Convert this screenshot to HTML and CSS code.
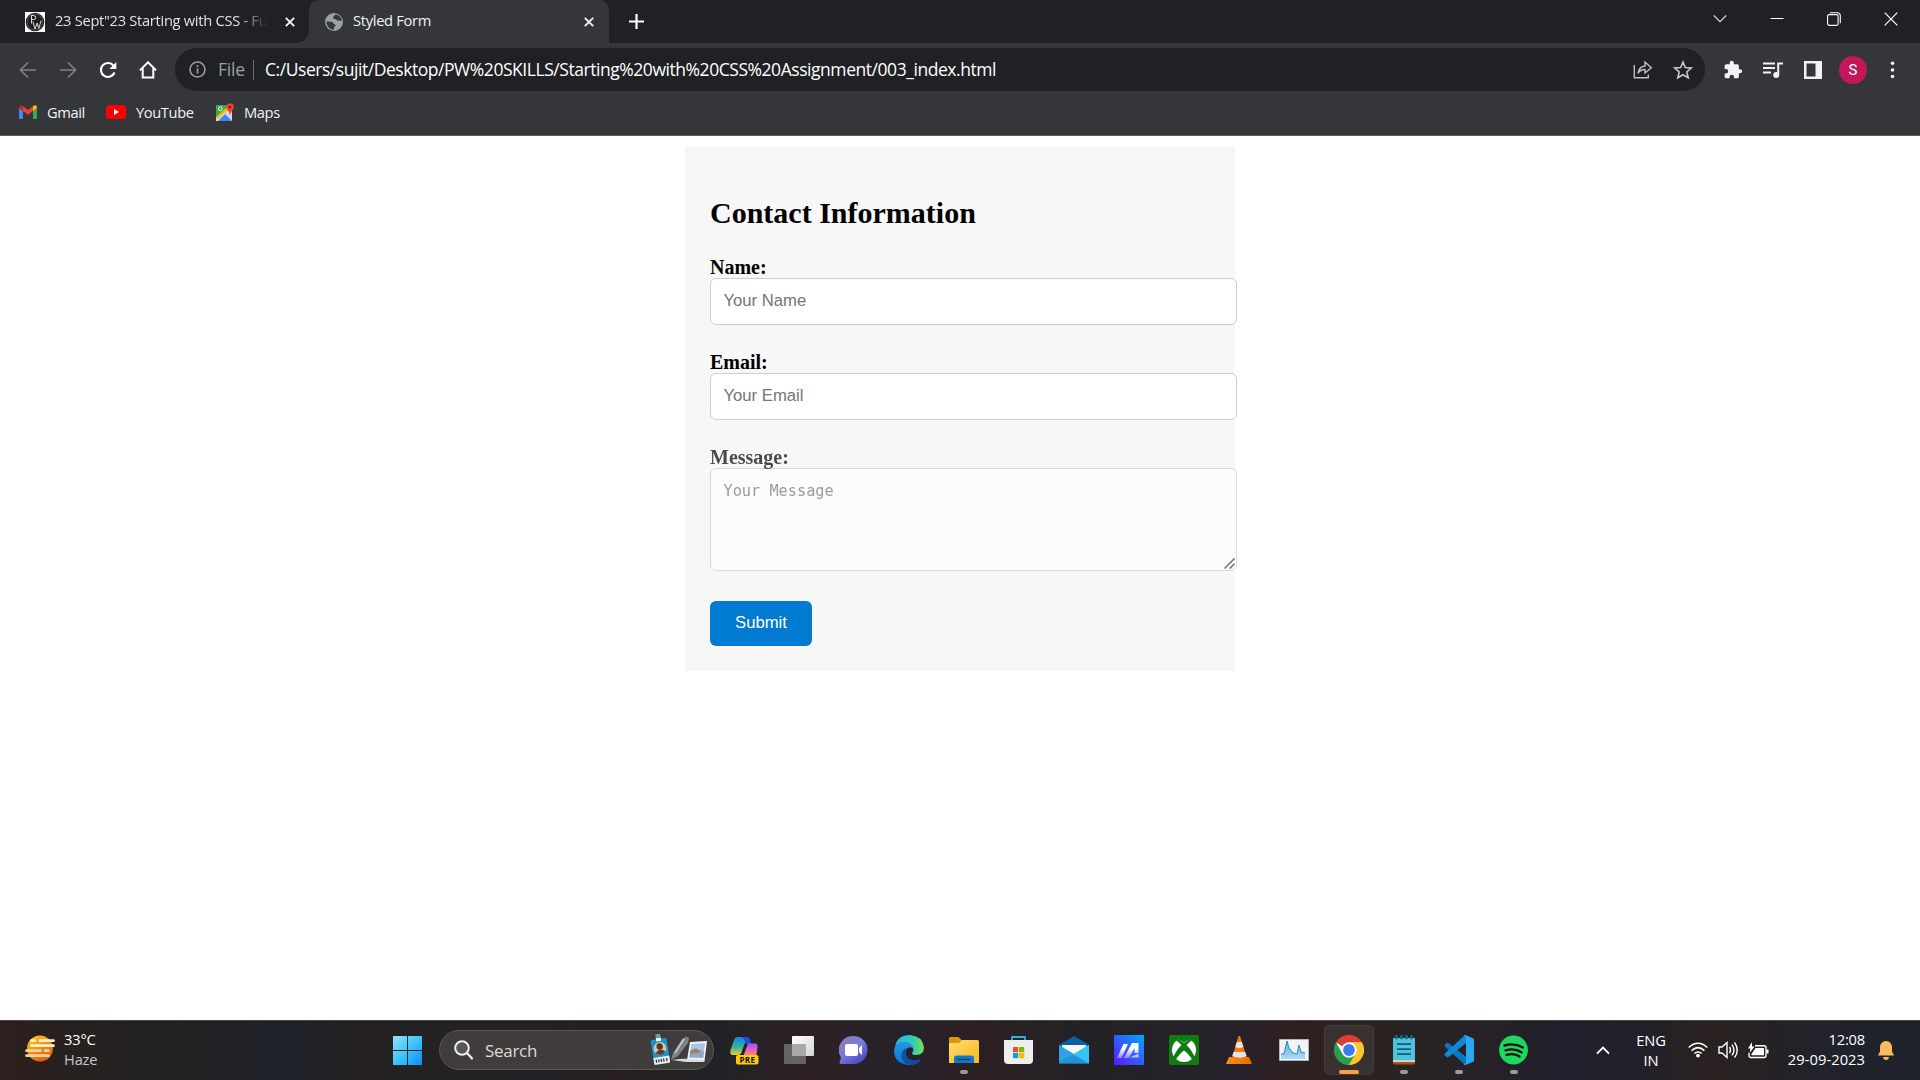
FILE: index.html
```html
<!DOCTYPE html>
<html lang="en">
<head>
<meta charset="utf-8">
<title>Styled Form</title>
<link rel="stylesheet" href="styles.css">
</head>
<body>
<header class="browser">
  <div class="tabstrip">
    <div class="tab tab-idle">
      <svg class="favicon" width="20" height="20" viewBox="0 0 20 20"><path fill="#fff" d="M0 0h20v20H0z"/><circle cx="10" cy="10" r="9.3" fill="#1d1e20"/><circle cx="10" cy="10" r="7.9" fill="none" stroke="#777" stroke-width=".6"/><path d="M6.500 11.500V3.500h2q2.200 0 2.200 2t-2.200 2H6.500M8 9.500l2 7.500 2.200-6 1.500 5.500 2.500-8" fill="none" stroke="#ddd" stroke-width="1"/></svg>
      <span class="tab-title">23 Sept"23 Starting with CSS - Full</span>
      <svg width="10" height="10" viewBox="0 0 10 10"><path d="M.8.8l8.400 8.400M9.200.8L.8 9.200" stroke="#f1f3f4" stroke-width="1.900"/></svg>
    </div>
    <div class="tab tab-active">
      <svg width="18" height="18" viewBox="0 0 18 18"><circle cx="9" cy="9" r="9" fill="#9aa0a6"/><path d="M10.500 1.500Q8 3 8 5q1 1.500 3 1 .5 2 2.500 1.500L16.800 8Q17 4 12 1.700zM1.500 8.500l5 .2q2.200.3 2 2.300 2.500 0 2 2l-1.500 1v2.700Q3 16.500 1.500 10z" fill="#35363a"/></svg>
      <span class="tab-title">Styled Form</span>
      <svg width="10" height="10" viewBox="0 0 10 10"><path d="M.8.8l8.400 8.400M9.200.8L.8 9.200" stroke="#f1f3f4" stroke-width="1.900"/></svg>
    </div>
    <svg class="new-tab" width="15" height="15" viewBox="0 0 15 15"><path d="M7.500 0v15M0 7.500h15" stroke="#fff" stroke-width="2.200"/></svg>
    <div class="window-controls">
      <svg width="14" height="14" viewBox="0 0 14 14"><path d="M.8 3.500L7 9.700l6.200-6.200" fill="none" stroke="#ddd" stroke-width="1.100"/></svg>
      <svg width="14" height="14" viewBox="0 0 14 14"><path d="M.5 6.500h13" stroke="#fff"/></svg>
      <svg width="14" height="14" viewBox="0 0 14 14"><rect x=".6" y="2.600" width="10.500" height="10.800" rx="1.600" fill="none" stroke="#fff" stroke-width="1.100"/><path d="M2.800.7h7.500q3 0 3 3v7.600" fill="none" stroke="#fff" stroke-width="1.100"/></svg>
      <svg width="14" height="14" viewBox="0 0 14 14"><path d="M.7.7l12.600 12.600M13.300.7L.7 13.300" stroke="#fff" stroke-width="1.200"/></svg>
    </div>
  </div>
  <div class="toolbar">
    <div class="slots">
      <svg width="18" height="18" viewBox="0 0 18 18"><path d="M17 9H2M9 1.500L1.500 9 9 16.500" fill="none" stroke="#7d7e82" stroke-width="1.700"/></svg>
      <svg width="18" height="18" viewBox="0 0 18 18"><path d="M1 9h15M9 1.500L16.500 9 9 16.500" fill="none" stroke="#7d7e82" stroke-width="1.700"/></svg>
      <svg width="18" height="18" viewBox="0 0 18 18"><path d="M15.500 11.500A7 7 0 1 1 14.500 4.700" fill="none" stroke="#fff" stroke-width="2.100"/><path d="M17.300 1v7h-7z" fill="#fff"/></svg>
      <svg width="18" height="18" viewBox="0 0 18 18"><path d="M.9 9.400L9 1.300l8.100 8.100M3.700 7v9.600h10.600V7" fill="none" stroke="#fff" stroke-width="2"/></svg>
    </div>
    <div class="omnibox">
      <svg width="17" height="17" viewBox="0 0 17 17"><circle cx="8.500" cy="8.500" r="7.500" fill="none" stroke="#9aa0a6" stroke-width="1.600"/><path d="M8.500 7.500v5M8.500 4.300v1.800" stroke="#9aa0a6" stroke-width="1.700"/></svg>
      <span class="scheme">File</span>
      <span class="url">C:/Users/sujit/Desktop/PW%20SKILLS/Starting%20with%20CSS%20Assignment/003_index.html</span>
      <div class="slots">
        <svg width="20" height="20" viewBox="0 0 20 20"><path d="M1.300 5v12.800h14V14.500M5 13.500Q6 6.500 12 6V2l6.300 5.700L12 13V9.500q-5 0-7 4z" fill="none" stroke="#bdc1c6" stroke-width="1.400"/></svg>
        <svg width="20" height="20" viewBox="0 0 20 20"><path d="M10 2l2.300 5.500 6 .5-4.500 4 1.400 5.800L10 14.700l-5.200 3.100L6.200 12 1.700 8l6-.5z" fill="none" stroke="#c4c7cb" stroke-width="1.600"/></svg>
      </div>
    </div>
    <div class="slots">
      <svg width="20" height="20" viewBox="0 0 24 24"><path d="M20.500 11H19V7a2 2 0 0 0-2-2h-4V3.500a2.500 2.500 0 0 0-5 0V5H4a2 2 0 0 0-2 2v3.800h1.500a2.700 2.700 0 0 1 0 5.400H2V20a2 2 0 0 0 2 2h3.800v-1.500a2.700 2.700 0 0 1 5.400 0V22H17a2 2 0 0 0 2-2v-4h1.500a2.500 2.500 0 0 0 0-5z" fill="#f1f3f4"/></svg>
      <svg width="20" height="18" viewBox="0 0 20 18"><path d="M0 2.600h12M0 7.100h12M0 11.600h8M15.200 14V2.600H20" stroke="#f1f3f4" stroke-width="2" fill="none"/><circle cx="13.200" cy="14" r="3" fill="#f1f3f4"/></svg>
      <svg width="18" height="18" viewBox="0 0 18 18"><path d="M0 0h18v18H0zM2.500 2.500v13h9v-13z" fill="#f1f3f4" fill-rule="evenodd"/></svg>
      <span class="avatar">S</span>
      <svg width="18" height="18" viewBox="0 0 18 18"><g fill="#f1f3f4"><circle cx="8.500" cy="2.300" r="1.800"/><circle cx="8.500" cy="9" r="1.800"/><circle cx="8.500" cy="15.500" r="1.800"/></g></svg>
    </div>
  </div>
  <nav class="bookmarks">
    <span class="bookmark gmail"><svg width="18" height="14" viewBox="0 0 18 14"><path d="M0 3v10q0 1 1 1h3V5z" fill="#4285f4"/><path d="M18 3v10q0 1-1 1h-3V5z" fill="#34a853"/><path d="M14 1.300V6l4-3V2q-.5-2.500-2.800-1.500z" fill="#fbbc04"/><path d="M0 2v1.200L4 6V1.300L2.800.5Q.5-.3 0 2z" fill="#c5221f"/><path d="M4 1.300L9 5l5-3.700V6L9 9.800 4 6z" fill="#ea4335"/></svg>Gmail</span>
    <span class="bookmark youtube"><svg width="20" height="14" viewBox="0 0 20 14"><rect width="20" height="14" rx="3.500" fill="#f00"/><path d="M8 4v6l5-3z" fill="#fff"/></svg>YouTube</span>
    <span class="bookmark maps"><svg width="18" height="19" viewBox="0 0 18 19"><path d="M0 2h16v16H0z" fill="#34a853"/><path d="M0 15L13 3l3 3v12H0z" fill="#d8dce0"/><path d="M2 18l7-7 7 7z" fill="#4285f4"/><path d="M1 15L13 4" stroke="#fbbc04" stroke-width="2.500"/><circle cx="4.300" cy="5.800" r="1.900" fill="none" stroke="#fff"/><path d="M14 12q-1-3.500-2.800-5.200Q9 3 12 .8q4-1.600 5.700 2 .6 2-1 4Q15 9 14 12z" fill="#ea4335"/><circle cx="14" cy="4.200" r="1.400" fill="#8c1914"/></svg>Maps</span>
  </nav>
</header>

<main class="page">
  <form class="contact">
    <h2>Contact Information</h2>
    <label for="name">Name:</label>
    <input id="name" type="text" placeholder="Your Name">
    <label for="email">Email:</label>
    <input id="email" type="email" placeholder="Your Email">
    <div class="faded">
      <label for="message">Message:</label>
      <textarea id="message" placeholder="Your Message"></textarea>
      <svg class="grip" width="11" height="11" viewBox="0 0 11 11"><path d="M.5 10.500l10-10M5.700 10.500l4.800-4.800" stroke="#333" stroke-width="1.500"/></svg>
    </div>
    <button type="button">Submit</button>
  </form>
</main>

<footer class="taskbar">
  <div class="weather">
    <svg width="30" height="28" viewBox="0 0 30 28"><defs><linearGradient id="sun" x1="0" y1="0" x2=".6" y2="1"><stop stop-color="#ffd11a"/><stop offset="1" stop-color="#e65b13"/></linearGradient></defs><circle cx="15" cy="13.500" r="13" fill="url(#sun)"/><g stroke-width="2.700" stroke-linecap="round"><path d="M6.500 5.700h3.500M15 5.700h13.500M6.500 10.700h22" stroke="#fff0c4"/><path d="M1.500 15.700h14M20 15.700h3.500M1.500 20.700h22" stroke="#eed49a"/></g></svg>
    <div class="stack"><span>33°C</span><span class="dim">Haze</span></div>
  </div>
  <svg class="start" width="29" height="29" viewBox="0 0 29 29"><defs><linearGradient id="win" x1="0" y1="0" x2="1" y2="1"><stop stop-color="#8fe3ff"/><stop offset=".5" stop-color="#3fc3fb"/><stop offset="1" stop-color="#0a8cf5"/></linearGradient></defs><path d="M0 0h14v14H0zM15 0h14v14H15zM0 15h14v14H0zM15 15h14v14H15z" fill="url(#win)"/></svg>
  <div class="search">
    <svg width="19" height="20" viewBox="0 0 19 20"><circle cx="8" cy="8" r="6.800" fill="#555" stroke="#eee" stroke-width="2"/><path d="M13 13l5 5.500" stroke="#eee" stroke-width="2.300" stroke-linecap="round"/></svg>
    <span>Search</span>
    <svg class="doodle" width="57" height="32" viewBox="0 0 57 32"><g transform="rotate(-9 10 18)"><path d="M8 0h5v6H8z" fill="#789aa4"/><rect x="2.500" y="5" width="16" height="25" rx="1.500" fill="#1c91cf"/><path d="M8 4h5v3H8z" fill="#fff"/><circle cx="10.500" cy="14.500" r="6.400" fill="#d8c3a5"/><circle cx="10.500" cy="12.500" r="3.200" fill="#4d3528"/><path d="M5.500 18.500q5-6 10 0-5 5-10 0z" fill="#5d3d2c"/><path d="M2.500 23h16v6q0 1-1 1h-14q-1 0-1-1z" fill="#e8edf0"/><path d="M5 25v3M7.500 25v3M10 25v3M12.500 25v3M15.500 25v3" stroke="#222" stroke-width="1.200"/></g><path d="M40 8l17-1-2.500 20L37 26z" fill="#edf3fa"/><path d="M41.500 10l13.500-.8-1.200 8.800-13.800 1z" fill="#a9c5e4"/><path d="M40.500 16l5-2 8.500 4-.7 6-14.300-.5z" fill="#8ea9c8"/><path d="M40.300 17l5.700-2.500 5 3-3 1.500-8 1z" fill="#a5806c"/><path d="M22 26q12-2 16-1l17 1.500-1 1.500H36z" fill="#d5dbe4"/><path d="M21 26l2-7 9-14 4-2.500 3 1.500-1 5-10 13z" fill="#788387"/><path d="M25 19l9-14" stroke="#dbe3e3" stroke-width="1.300"/></svg>
  </div>
  <div class="apps">
    <span class="app"><svg width="30" height="30" viewBox="0 0 30 30"><defs><linearGradient id="cpa" x1="0" y1="0" x2="0" y2="1"><stop stop-color="#1780e8"/><stop offset=".55" stop-color="#31b49a"/><stop offset="1" stop-color="#f2cd28"/></linearGradient><linearGradient id="cpb" x1="0" y1="0" x2="0" y2="1"><stop stop-color="#9a59ee"/><stop offset=".5" stop-color="#e961bb"/><stop offset="1" stop-color="#f69567"/></linearGradient></defs><path d="M8 2h10l-5 14q-1 4-4 4H3.500Q.5 20 1.500 15L5 5q1-3 3-3z" fill="url(#cpa)"/><path d="M12 2h6.500q2.500 0 3.500 7h-5.500q-.5-6-4.500-7z" fill="#1d4fd8"/><path d="M19 8.500h7q3 0 2.500 4L27 22H14z" fill="url(#cpb)"/><rect x="7" y="20" width="22.500" height="9.500" rx="2" fill="#ffc80a"/><text x="18.400" y="27.700" text-anchor="middle" font-size="8" font-weight="700" letter-spacing=".4" fill="#111">PRE</text></svg></span>
    <span class="app"><svg width="30" height="30" viewBox="0 0 30 30"><defs><linearGradient id="tv" x1="0" y1="0" x2="1" y2="1"><stop stop-color="#fff"/><stop offset="1" stop-color="#d4d4d4"/></linearGradient></defs><rect x="8" y="1" width="22" height="20" rx="1" fill="url(#tv)"/><rect y="9" width="22" height="20" rx="1" fill="#646464"/><path d="M8 9h14v12H8z" fill="#a9a9a9"/></svg></span>
    <span class="app"><svg width="30" height="30" viewBox="0 0 30 30"><defs><linearGradient id="ch" x1="0" y1="0" x2=".7" y2="1"><stop stop-color="#9572b5"/><stop offset=".5" stop-color="#7780d8"/><stop offset="1" stop-color="#4b4bc2"/></linearGradient></defs><path d="M14.500 1a14 14 0 1 1 0 28H1q-1-1 1-6.500A14 14 0 0 1 14.500 1z" fill="url(#ch)"/><rect x="6" y="9" width="13" height="12" rx="2" fill="#fff"/><path d="M20 13l3-3v10l-3-3z" fill="#fff"/></svg></span>
    <span class="app"><svg width="30" height="30" viewBox="0 0 30 30"><defs><linearGradient id="ea"><stop stop-color="#2bb5e8"/><stop offset=".6" stop-color="#33c8c0"/><stop offset="1" stop-color="#74e44c"/></linearGradient><linearGradient id="eb" x1="0" y1="0" x2="0" y2="1"><stop stop-color="#239ddd"/><stop offset="1" stop-color="#0670cf"/></linearGradient></defs><path d="M1 12Q3 0 16 0q12 1 14 12 0 8-8 8-4 0-4-2 2-2 1-5-2-5-8-6Q4 7 1 12z" fill="url(#ea)"/><path d="M0 17Q0 7 10 6.700q8 0 9.500 7-6-4-8 3 0 9 10 10 2 0 5-1.300Q22 30 15 30 1 29 0 17z" fill="url(#eb)"/><path d="M11.500 16q-1 8 7 9 5 1 9-2-4 7-11 7-9-2-9-9 0-6 5-8z" fill="#104f9f"/></svg></span>
    <span class="app"><svg width="30" height="30" viewBox="0 0 30 30"><defs><linearGradient id="fo" x1="0" y1="0" x2="1" y2="1"><stop stop-color="#ffdd70"/><stop offset="1" stop-color="#fbb819"/></linearGradient></defs><path d="M0 3.500Q0 2 1.500 2h8l3 3H28v8H0z" fill="#dc9a08"/><path d="M0 8h10l3-3h15.500Q30 5 30 6.500V28H0z" fill="url(#fo)"/><path d="M5 28v-5q0-2.500 2.500-2.500h15q2.500 0 2.500 2.500v5z" fill="#117acb"/><path d="M9 24.500h12" stroke="#0b477e" stroke-width="1.400" stroke-linecap="round"/></svg><i class="dot"></i></span>
    <span class="app"><svg width="30" height="30" viewBox="0 0 30 30"><path d="M8 6V2h13v4" fill="none" stroke="#24b3e6" stroke-width="1.800"/><path d="M0 5h29v20q0 4-4 4H4q-4 0-4-4z" fill="#eee"/><path d="M9 12h5.200v5.200H9z" fill="#f04e23"/><path d="M15 12h5.200v5.200H15z" fill="#7eb800"/><path d="M9 18h5.200v5.200H9z" fill="#00a2ed"/><path d="M15 18h5.200v5.200H15z" fill="#fdb900"/></svg></span>
    <span class="app"><svg width="30" height="30" viewBox="0 0 30 30"><path d="M0 10L15 1l15 9v5H0z" fill="#0960a8"/><path d="M3 10h24v9H3z" fill="#f5f5f5"/><path d="M0 10l15 9 15-9v18.500H0z" fill="#2aa4e6"/><path d="M15 19l15-9v18.500z" fill="#34c5f3"/><path d="M13 20l17 8.500H0V27z" fill="#1581cc" opacity=".45"/></svg></span>
    <span class="app"><svg width="30" height="30" viewBox="0 0 30 30"><defs><linearGradient id="as" x1="0" y1="1" x2="1" y2="0"><stop stop-color="#5d17ff"/><stop offset="1" stop-color="#00a8ff"/></linearGradient><linearGradient id="am" x1="0" y1="1" x2="0" y2="0"><stop stop-color="#8f7dff"/><stop offset=".6" stop-color="#fff"/></linearGradient></defs><path d="M0 0h30v30H0z" fill="url(#as)"/><path d="M3 23l6.500-14H14L7.500 23zM10 23l8-15h6.500v10H20.500v-5L15 23z" fill="url(#am)"/><path d="M16 22.500l8.500-4v4z" fill="#b3c8ff"/></svg></span>
    <span class="app"><svg width="30" height="30" viewBox="0 0 30 30"><rect width="30" height="30" rx="2" fill="#107c10"/><circle cx="15" cy="15" r="12" fill="#fff"/><path d="M6 5q4-1.500 9 2.500Q20 3.500 24 5l-1-2H7zM3 25Q7 15 12.500 10L7 5l2-1 6 4 6-4 2 1-5.500 5Q23 15 27 25l-3 1q-4-7-9-10.500Q10 19 6 26z" fill="#107c10"/></svg></span>
    <span class="app"><svg width="30" height="30" viewBox="0 0 30 30"><defs><linearGradient id="vl"><stop stop-color="#f59312"/><stop offset="1" stop-color="#e86605"/></linearGradient></defs><path d="M5 22h20l3 7H2z" fill="url(#vl)"/><path d="M14.500 1h1.500l7 22q-7.500 4-15 0z" fill="#f17c0c"/><path d="M12.800 7h5l1.600 5q-4 2-8.200 0zM9.500 17h11.800l1.200 4q-7 3.500-14.300 0z" fill="#e4e4e4"/></svg></span>
    <span class="app"><svg width="30" height="30" viewBox="0 0 30 30"><defs><linearGradient id="mo" x1="0" y1="0" x2="0" y2="1"><stop stop-color="#5da9d7"/><stop offset="1" stop-color="#a9ddfa"/></linearGradient></defs><path d="M.5 4.500h29v21H.5z" fill="#f1f3f8" stroke="#aeb8c4"/><path d="M2 24v-5h3l3-13 2 7 4 5 4 1 2-9 2 7 4 1v6z" fill="url(#mo)"/><path d="M2 19h3l3-13 2 7 4 5 4 1 2-9 2 7 4 1" fill="none" stroke="#3286b7"/></svg></span>
    <span class="app current"><svg width="30" height="30" viewBox="0 0 30 30"><circle cx="15" cy="15" r="14.500" fill="#fff"/><path d="M15 0a15 15 0 0 1 13 7.500H15a7.500 7.500 0 0 0-6.500 3.750L2 7.500A15 15 0 0 1 15 0z" fill="#e33b2e"/><path d="M28 7.500A15 15 0 0 1 15 30l6.500-11.250A7.500 7.500 0 0 0 15 7.500z" fill="#fcc52b"/><path d="M15 30A15 15 0 0 1 2 7.500l6.500 11.250A7.500 7.500 0 0 0 21.500 18.750z" fill="#2b9d4b"/><circle cx="15" cy="15" r="7.500" fill="#fff"/><circle cx="15" cy="15" r="5.900" fill="#3a7cec"/></svg><i class="dot"></i></span>
    <span class="app"><svg width="30" height="30" viewBox="0 0 30 30"><path d="M4 24h22v4q0 1.500-2 1.500H6q-2 0-2-1.500z" fill="#b44e13"/><path d="M4 22h22v4.800H4z" fill="#f5f5f5"/><path d="M4 3h22v22.500H4z" fill="#4fc1db"/><path d="M8 9.200h14M8 14.200h14M8 19.200h14" stroke="#08617f" stroke-width="1.800"/><path d="M7.500 1.500v1.500M12.500 1.500v1.500M17.500 1.500v1.500M22.500 1.500v1.500" stroke="#0c6e90" stroke-width="2.800" stroke-linecap="round"/></svg><i class="dot"></i></span>
    <span class="app"><svg width="30" height="30" viewBox="0 0 30 30"><path d="M21 30L.8 11.500Q0 10.500.8 9.700L2.500 8Q3.500 7.300 4.500 8L26 25z" fill="#0878bf"/><path d="M21 0L.8 18.500q-.8 1 0 1.800L2.500 22q1 .7 2 0L26 5z" fill="#1388d2"/><path d="M21.500 0L29 3.200q1 .5 1 1.500v20.600q0 1-1 1.500L21.500 30q-1 0-1.500-1 2 0 2-2V3q0-2-2-2 .5-1 1.500-1z" fill="#2aa8f2"/></svg><i class="dot"></i></span>
    <span class="app"><svg width="30" height="30" viewBox="0 0 30 30"><circle cx="14.500" cy="15" r="14.400" fill="#1ed760"/><path d="M5.500 10.500Q15 7.500 24 12.500M6.500 15.300q9-2.500 16 2M7.500 19.800q8-2 13 1.700" fill="none" stroke="#111" stroke-width="2.400" stroke-linecap="round"/></svg><i class="dot"></i></span>
  </div>
  <div class="tray">
    <svg class="up" width="14" height="9" viewBox="0 0 14 9"><path d="M1 7.700l6-6 6 6" fill="none" stroke="#fff" stroke-width="1.900"/></svg>
    <div class="stack lang"><span>ENG</span><span>IN</span></div>
    <svg class="wifi" width="20" height="16" viewBox="0 0 20 16"><g fill="none" stroke="#fff" stroke-width="1.600"><path d="M.7 5.500q9.300-8.500 18.600 0M3.600 8.600q6.400-6 12.800 0M6.400 11.500q3.600-3 7.200 0"/></g><circle cx="10" cy="13.600" r="1.900" fill="#fff"/></svg>
    <svg class="volume" width="20" height="18" viewBox="0 0 20 18"><g fill="none" stroke="#fff" stroke-width="1.400"><path d="M1 6v6h3l5 4.500v-15L4 6zM11.500 6q2 3 0 6M14 3.600q4 5.400 0 10.800M16.500 1.300q5.500 7.700 0 15.400"/></g></svg>
    <svg class="battery" width="21" height="17" viewBox="0 0 21 17"><path d="M7 3.800h9q2 0 2 2v7.700q0 2-2 2H3q-2 0-2-2V11" fill="none" stroke="#fff" stroke-width="1.400"/><path d="M7.500 6H16v7.300H3.500V12zM18.500 7.500h2v4h-2zM4 0L0 6.500h2.500L1.500 11 6.500 4.500H4z" fill="#fff"/></svg>
    <div class="stack clock"><span>12:08</span><span class="date">29-09-2023</span></div>
    <svg class="bell" width="16" height="19" viewBox="0 0 16 19"><path d="M8 0q5.500.3 6 6v4.500l2 4H0l2-4V6q.5-5.700 6-6zM5 16h6q-.5 3-3 3t-3-3z" fill="#ffb85c"/></svg>
  </div>
</footer>
</body>
</html>
```
FILE: styles.css
```css
* { box-sizing: border-box; }
body {
  margin: 0;
  width: 1920px;
  height: 1080px;
  display: flex;
  flex-direction: column;
  overflow: hidden;
  background: #fff;
  font-family: "Open Sans", "Noto Sans", sans-serif;
}
svg { display: block; flex: none; }

/* Browser chrome */
.browser {
  height: 136px;
  flex: none;
  background: #35363a;
  border-bottom: 1px solid #5d5e62;
  color: #f1f3f4;
}
.tabstrip { display: flex; align-items: center; height: 43px; background: #202124; }
.tab { display: flex; align-items: center; height: 43px; font-size: 14.700px; letter-spacing: -0.300px; white-space: nowrap; }
.tab-idle { width: 309px; padding: 0 14px 0 25px; background: radial-gradient(circle at 0 0, transparent 11.500px, #35363a 12px) no-repeat right bottom / 12px 12px; }
.tab-title { flex: 1; margin-left: 10px; padding-bottom: 3px; overflow: hidden; }
.tab-idle .tab-title { margin-right: 15px; letter-spacing: -0.300px; mask-image: linear-gradient(90deg, #000 85%, transparent 99%); color: #dfe1e5; }
.tab-active { width: 300px; padding: 0 15px 0 16px; background: #35363a; border-radius: 10px 10px 0 0; }
.new-tab { margin-left: 20px; }
.window-controls { display: grid; grid-template-columns: 57px 57px 57px 58px; justify-items: center; margin: -6px 0 0 auto; }

.toolbar { display: flex; align-items: center; height: 53px; padding: 0 7px 0 8px; }
.slots { display: flex; align-items: center; }
.toolbar > .slots { display: grid; grid-auto-flow: column; grid-auto-columns: 40px; justify-items: center; }
.toolbar > .slots:first-child { width: 167px; }
.toolbar > .slots:last-child { width: 200px; margin-left: 8px; }
.omnibox {
  display: flex;
  align-items: center;
  width: 1530px;
  height: 43px;
  padding: 0 12px 0 14px;
  border-radius: 22px;
  background: #202124;
  font-size: 17.500px;
}
.scheme { width: 36px; height: 20px; margin: 0 11px 0 12px; border-right: 1px solid #6b6e73; line-height: 19px; color: #9aa0a6; letter-spacing: -0.200px; }
.url { flex: 1; padding-bottom: 1px; color: #fff; letter-spacing: -0.450px; white-space: nowrap; }
.omnibox .slots { gap: 20px; }
.avatar { display: grid; place-items: center; width: 28px; height: 28px; border-radius: 50%; background: #c2185b; color: #fff; font: 15px Roboto, sans-serif; }
.bookmarks { display: flex; align-items: center; height: 34px; padding: 0 0 2px 19px; font-size: 14.700px; letter-spacing: -0.400px; }
.bookmark { display: flex; align-items: center; gap: 10px; }
.gmail { width: 87px; }
.youtube { width: 110px; }

/* Page */
.page { flex: 1; padding-top: 10px; }
.contact { width: 550px; height: 525px; margin: 0 auto; padding: 25px; background: #f7f7f7; font-family: "Liberation Serif", "Times New Roman", serif; }
.contact h2 { margin: 25px 0; font-size: 30px; line-height: 34px; }
.contact label { display: block; height: 23px; font-size: 20px; line-height: 24px; font-weight: 700; }
.contact input, .contact textarea { display: block; width: 527px; border: 1px solid #ccc; border-radius: 6px; background: #fff; outline: 0; }
.contact input { height: 47px; margin-bottom: 25px; padding: 11px 12px 12px 12.500px; font: 16.670px "Liberation Sans", Arial, sans-serif; }
.contact ::placeholder { color: #757575; opacity: 1; }
.contact textarea { height: 103px; padding: 13px 12.500px; resize: none; font: 15.250px "DejaVu Sans Mono", monospace; }
.faded { position: relative; height: 126px; margin-bottom: 30px; opacity: .7; }
.grip { position: absolute; left: 514px; bottom: 2px; }
.contact button { display: block; width: 102px; height: 45px; padding: 0 0 2px; border: 0; border-radius: 6px; background: #007bd1; color: #fff; font: 16.670px "Liberation Sans", Arial, sans-serif; }

/* Taskbar */
.taskbar {
  display: flex;
  align-items: center;
  height: 60px;
  flex: none;
  padding-bottom: 1px;
  border-top: 1px solid #474747;
  background: linear-gradient(90deg, #2d1f1e 0, #25211f 90px, #222123 190px, #1e222b 290px, #242120 360px, #222125 540px, #261e20 620px, #222226 720px, #2d2023 810px, #26222a 900px, #2c1f23 980px, #222226 1090px, #26212a 1240px, #302020 1290px, #292322 1400px, #252128 1500px, #221e2c 1570px, #222128 1650px, #29211f 1710px, #21222b 1820px, #1f222a 1920px);
  color: #fff;
  font-size: 14.700px;
}
.stack { display: flex; flex-direction: column; margin-top: -3px; line-height: 20px; letter-spacing: -0.200px; white-space: nowrap; }
.dim { color: #c8c5c4; }
.weather { display: flex; align-items: center; width: 393px; padding-left: 25px; gap: 9px; }
.weather > svg { margin-top: -2px; }
.search { display: flex; align-items: center; width: 275px; height: 40px; margin-left: 17px; padding: 0 6px 0 14px; border: 1px solid #595656; border-radius: 20px; background: #403c3c; color: #dcdada; font-size: 17px; letter-spacing: -0.300px; }
.search span { flex: 1; margin-left: 12px; }
.apps { display: flex; gap: 5px; margin-left: 5px; }
.app { display: grid; place-items: center; position: relative; width: 50px; height: 50px; border-radius: 5px; }
.current { background: #393130; border: 1px solid #443c3b; }
.dot { position: absolute; bottom: 1px; width: 8px; height: 4px; border-radius: 2px; background: #9b9999; }
.current .dot { bottom: 0; width: 20px; background: #ff9b45; }
.tray { display: flex; align-items: center; flex: 1; }
.up { margin-left: 57px; }
.lang { width: 40px; margin: 0 0 0 21px; align-items: center; }
.wifi { margin-left: 17px; }
.volume { margin-left: 10px; }
.battery { margin-left: 10px; }
.clock { width: 90px; margin-left: 6px; margin-right: 1px; align-items: flex-end; }
.date { letter-spacing: 0.050px; }
.bell { margin-left: 12px; }
```
